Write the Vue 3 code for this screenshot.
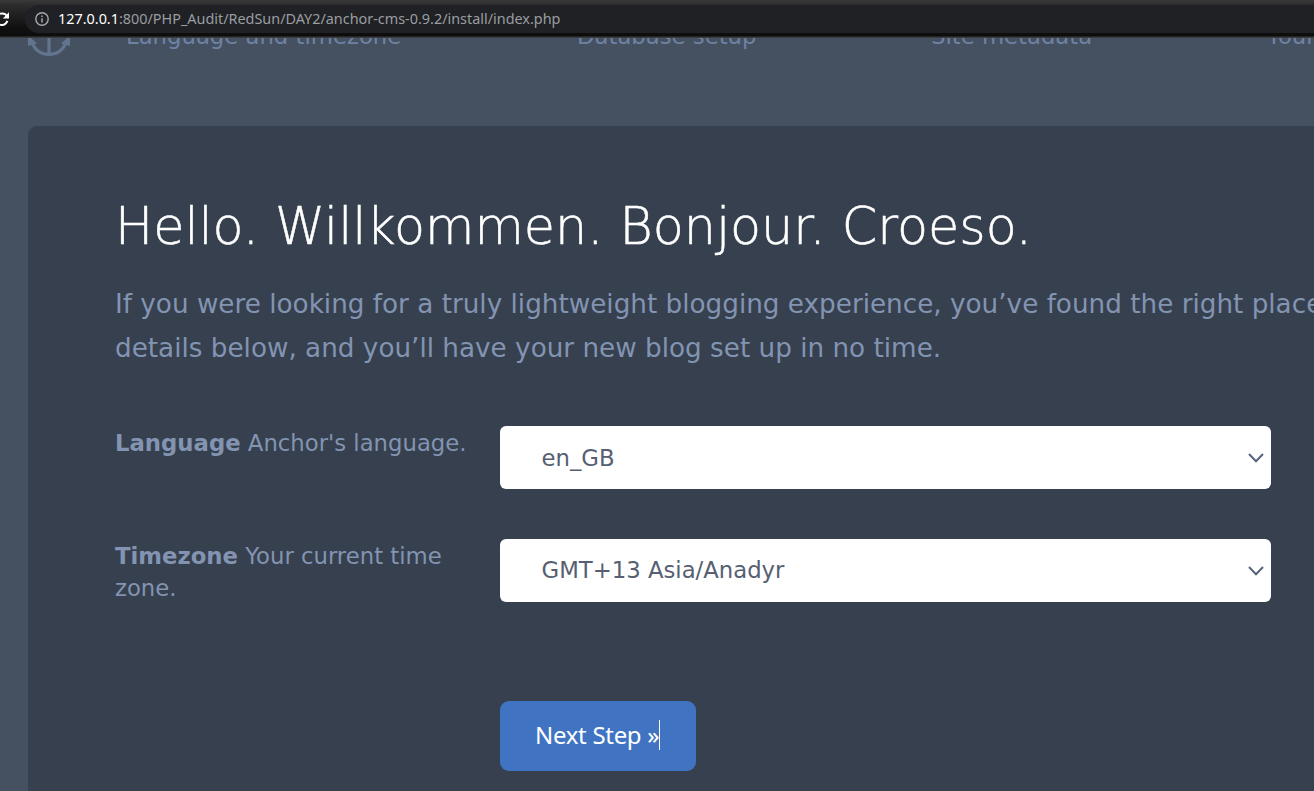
<script setup>
const steps = [
  { id: 'language', label: 'Language and timezone' },
  { id: 'database', label: 'Database setup' },
  { id: 'metadata', label: 'Site metadata' },
  { id: 'account', label: 'Your first account' },
]
const fields = [
  { name: 'Language', hint: "Anchor's language.", value: 'en_GB' },
  { name: 'Timezone', hint: 'Your current time zone.', value: 'GMT+13 Asia/Anadyr' },
]
</script>

<template>
  <div class="window">
    <header class="browser">
      <svg class="reload" width="10" height="16" viewBox="0 0 10 16">
        <path d="M0 2.900C3 1.900 5.700 2.900 7.100 5.200M0 13.600C3.400 14.500 6.200 12.800 7.400 9.800" fill="none" stroke="#fff" stroke-width="2" />
        <path d="M9 1.200V7.400H2.800Z" fill="#fff" />
      </svg>
      <div class="address">
        <svg class="info" width="16" height="16" viewBox="0 0 16 16">
          <circle cx="8" cy="8" r="6.200" fill="none" stroke="#a5a8ad" stroke-width="1.400" />
          <path d="M8 7.200V11.400M8 4.500V6" stroke="#a5a8ad" stroke-width="1.500" />
        </svg>
        <span class="url"><b>127.0.0.1</b>:800/PHP_Audit/RedSun/DAY2/anchor-cms-0.9.2/install/index.php</span>
      </div>
    </header>
    <main class="page">
      <nav class="steps">
        <svg class="anchor" width="42" height="19" viewBox="0 0 42 19">
          <path d="M21 0V17M3.500 3C6.500 12 13 16.400 21 16.400S35.500 12 38.500 3" fill="none" stroke="#62758f" stroke-width="3.200" />
          <path d="M0 0H3L9 5.500L0 8ZM42 0H39L33 5.500L42 8Z" fill="#62758f" />
        </svg>
        <span v-for="s in steps" :key="s.id" class="step" :class="s.id">{{ s.label }}</span>
      </nav>
      <section class="card">
        <h1>Hello. Willkommen. Bonjour. Croeso.</h1>
        <p class="intro">If you were looking for a truly lightweight blogging experience, you’ve found the right place.<br>details below, and you’ll have your new blog set up in no time.</p>
        <div v-for="f in fields" :key="f.name" class="field">
          <label><strong>{{ f.name }}</strong> {{ f.hint }}</label>
          <div class="select">
            <span>{{ f.value }}</span>
            <svg width="16" height="10" viewBox="0 0 16 10"><path d="M1 1L8 8.200L15 1" fill="none" stroke="#566579" stroke-width="2" /></svg>
          </div>
        </div>
        <button class="next"><span class="next-text">Next Step »</span></button>
      </section>
    </main>
  </div>
</template>

<style>
body { overflow: hidden; }
</style>

<style scoped>
.window {
  width: 1314px;
  height: 791px;
  overflow: hidden;
  display: flex;
  flex-direction: column;
  font-family: "DejaVu Sans", sans-serif;
  background: #455060;
}
.browser {
  flex: none;
  box-sizing: border-box;
  height: 38px;
  padding-top: 5px;
  display: flex;
  background: linear-gradient(#3a3a3a 0, #2c2c2c 5px, #101010 28px, #0d0d0d 36px, #3b3c3d 37px);
}
.reload { flex: none; margin-top: 6px; }
.address {
  flex: 1;
  height: 28px;
  margin-left: 15px;
  padding-left: 9px;
  border-radius: 14px 0 0 14px;
  background: #202124;
  display: flex;
  align-items: center;
}
.url {
  margin-left: 8px;
  font: 14.4px/28px "Noto Sans", sans-serif;
  white-space: nowrap;
  color: #9a9da1;
}
.url b { font-weight: 400; color: #fff; }
.page { flex: 1; overflow: hidden; }
.steps {
  height: 88px;
  display: flex;
  padding-left: 28px;
  white-space: nowrap;
  font-size: 22.75px;
  color: #6d82a3;
}
.anchor { flex: none; }
.step { flex: none; line-height: 28px; margin-top: -16px; height: 28px; }
.language { width: 451px; margin-left: 56px; }
.database { width: 354px; }
.metadata { width: 336px; }
.card {
  box-sizing: border-box;
  width: 1400px;
  height: 700px;
  padding: 69px 87px 0;
  border-radius: 9px;
  margin-left: 28px;
  background: #37404e;
}
h1 {
  margin: 0;
  font-size: 50.75px;
  line-height: 64px;
  font-weight: 200;
  -webkit-text-stroke: 0.5px #fff;
  color: #fff;
  white-space: nowrap;
}
.intro {
  margin: 23px 0 56px;
  font-size: 26.25px;
  line-height: 44px;
  color: #8294b2;
  white-space: nowrap;
}
.field {
  display: flex;
  height: 63px;
  margin-bottom: 50px;
  font-size: 22.75px;
  color: #8294b2;
}
.field label { width: 385px; box-sizing: border-box; padding: 1px 30px 0 0; line-height: 32px; }
.select {
  box-sizing: border-box;
  width: 771px;
  padding: 0 7px 0 41.5px;
  border-radius: 6px;
  background: #fff;
  color: #566072;
  display: flex;
  align-items: center;
  justify-content: space-between;
}
.field + .field .select span { margin-top: -2px; }
.next {
  display: flex;
  align-items: center;
  width: 196px;
  height: 70px;
  margin: 99px 0 0 385px;
  padding: 0 0 2px 35px;
  border: 0;
  border-radius: 9px;
  background: #4074c2;
  color: #fff;
  font: 24px/30px "Noto Sans", sans-serif;
  letter-spacing: -0.3px;
}
.next-text { border-right: 1px solid #fff; white-space: nowrap; height: 30px; }
</style>
